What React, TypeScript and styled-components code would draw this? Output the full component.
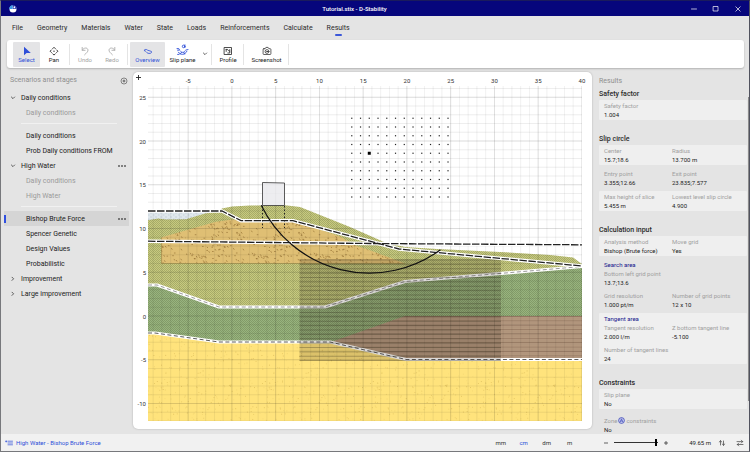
import React from "react";
import styled, { createGlobalStyle } from "styled-components";

const Global = createGlobalStyle`
  * { box-sizing: border-box; }
  html, body, #root { height: 100%; }
  body {
    margin: 0;
    background: #77787c;
    font-family: Roboto, "Open Sans", sans-serif;
    font-size: 7px;
    color: #222;
  }
  button {
    font: inherit;
    color: inherit;
    background: none;
    border: 0;
    padding: 0;
    margin: 0;
    text-align: left;
  }
`;

const Window = styled.div`
  display: flex;
  flex-direction: column;
  height: 100vh;
  overflow: hidden;
  background: #e4e4e4;
  border: 1px solid #77787c;
  border-top-color: #1a1b5c;
  border-right-color: #50525e;
`;

const TitleBar = styled.header`
  display: grid;
  grid-template-columns: 1fr auto 1fr;
  align-items: center;
  flex: none;
  height: 15px;
  padding: 0 6px 0 7px;
  background: #06067c;
  color: #fff;
`;

const AppTitle = styled.h1`
  margin: 0;
  padding-right: 42px;
  font-size: 6px;
  font-weight: 500;
`;

const WindowButtons = styled.div`
  display: flex;
  justify-content: flex-end;
  gap: 12px;
`;

const IconButton = styled.button`
  display: flex;
  align-items: center;
  justify-content: center;
  flex: none;
  width: 10px;
  height: 10px;
`;

const MenuBar = styled.nav`
  display: flex;
  flex: none;
  gap: 14px;
  height: 24px;
  padding: 6px 11px 0;
`;

const MenuItem = styled.button<{ $active?: boolean }>`
  display: flex;
  flex-direction: column;
  align-items: center;
  line-height: 12px;
  color: #2b2b2b;
  &::after {
    content: "";
    width: 7px;
    height: 2px;
    border-radius: 1px;
    background: ${(p) => (p.$active ? "#3b57d9" : "transparent")};
  }
`;

const Toolbar = styled.div`
  display: flex;
  align-items: center;
  flex: none;
  height: 28px;
  margin: 0 5px 4px 6px;
  padding: 0 6px;
  background: #fff;
  border-radius: 3px;
  box-shadow: 0 1px 2px rgba(0, 0, 0, 0.22);
`;

const Tool = styled.button<{ $w: number; $on?: boolean; $dim?: boolean }>`
  display: flex;
  flex-direction: column;
  align-items: center;
  justify-content: flex-end;
  flex: none;
  width: ${(p) => p.$w}px;
  height: 25px;
  padding-bottom: 3px;
  border-radius: 1px;
  font-size: 6px;
  line-height: 8px;
  white-space: nowrap;
  background: ${(p) => (p.$on ? "#e4e4e6" : "transparent")};
  color: ${(p) => (p.$on ? "#2f4fd8" : p.$dim ? "#a3a3a3" : "#222")};
`;

const Separator = styled.span`
  flex: none;
  width: 1px;
  height: 21px;
  margin: 0 2px 0 1px;
  background: #e4e4e4;
`;

const Body = styled.main`
  display: grid;
  grid-template-columns: 132px minmax(0, 1fr) 157px;
  flex: 1;
  min-height: 0;
`;

const Sidebar = styled.aside`
  padding: 1px 4px 0 3px;
`;

const SidebarHead = styled.div`
  display: flex;
  align-items: center;
  justify-content: space-between;
  height: 15px;
  margin-bottom: 2px;
  padding-left: 6px;
`;

const PanelTitle = styled.h2`
  margin: 0 0 1px;
  font-size: 7px;
  font-weight: 400;
  line-height: 12px;
  color: #8f8f8f;
`;

const TreeRow = styled.div<{ $selected?: boolean }>`
  display: flex;
  align-items: center;
  height: 15px;
  padding-right: 2px;
  background: ${(p) => (p.$selected ? "#d5d5d5" : "transparent")};
  &::before {
    content: "";
    width: 2px;
    height: 8px;
    background: ${(p) => (p.$selected ? "#2f4fe0" : "transparent")};
  }
`;

const TreeButton = styled.button<{ $child?: boolean; $dim?: boolean }>`
  display: flex;
  align-items: center;
  flex: 1;
  gap: 4px;
  padding-left: ${(p) => (p.$child ? 20 : 3)}px;
  line-height: 12px;
  white-space: nowrap;
  color: ${(p) => (p.$dim ? "#9a9a9a" : "#222")};
`;

const TreeRule = styled.hr`
  height: 1px;
  margin: 3px 12px 4px 17px;
  border: 0;
  background: #f1f1f1;
`;

const Canvas = styled.section`
  display: flex;
  min-width: 0;
  min-height: 0;
  margin-bottom: 5px;
  overflow: hidden;
  background: #fff;
  border-radius: 5px;
  box-shadow: 0 0 2px rgba(0, 0, 0, 0.25);
`;

const Drawing = styled.svg`
  display: block;
  width: 100%;
  height: 100%;
  font-family: Roboto, "Open Sans", sans-serif;
  font-size: 6px;
`;

const Results = styled.aside`
  position: relative;
  min-height: 0;
  overflow: hidden;
  padding: 3px 2px 0 7px;
`;

const ScrollThumb = styled.span`
  position: absolute;
  top: 25px;
  right: 0;
  width: 1px;
  height: 84%;
  background: #8c8c8c;
`;

const GroupTitle = styled.h3`
  margin: 0;
  font-size: 7px;
  font-weight: 500;
  line-height: 12px;
  color: #2a2a2a;
`;

const Group = styled.section<{ $loose?: boolean }>`
  display: flex;
  flex-direction: column;
  gap: ${(p) => (p.$loose ? 6 : 3)}px;
  margin-bottom: 13px;
`;

const Block = styled.div<{ $shade?: boolean }>`
  display: flex;
  flex-direction: column;
  gap: 4px;
  padding: 1px 5px;
  background: ${(p) => (p.$shade ? "#efefef" : "transparent")};
  border-radius: 1px;
`;

const Fields = styled.dl`
  display: grid;
  grid-template-columns: 68px 1fr;
  margin: 0;
  font-size: 6px;
  line-height: 9px;
  white-space: nowrap;
`;

const Label = styled.dt`
  display: flex;
  align-items: center;
  gap: 1px;
  color: #a0a0a0;
`;

const Value = styled.dd`
  margin: 0;
  color: #1c1c1c;
`;

const SubTitle = styled.h4`
  margin: 0 0 -4px;
  font-size: 6px;
  font-weight: 400;
  line-height: 9px;
  color: #15158c;
`;

const StatusBar = styled.footer`
  display: flex;
  align-items: center;
  flex: none;
  height: 17px;
  padding: 0 4px;
  background: #f1f1f1;
  font-size: 6px;
`;

const StatusPath = styled.span`
  display: flex;
  align-items: center;
  flex: 1;
  gap: 3px;
  color: #2f4fd8;
`;

const Units = styled.div`
  display: flex;
  margin-right: 20px;
`;

const UnitButton = styled.button<{ $on?: boolean }>`
  width: 23px;
  text-align: center;
  color: ${(p) => (p.$on ? "#2f4fd8" : "#333")};
`;

const ZoomGroup = styled.div`
  display: flex;
  align-items: center;
  gap: 3px;
`;

const ZoomRange = styled.input`
  appearance: none;
  width: 44px;
  height: 9px;
  margin: 0;
  background: linear-gradient(#333, #333) center / 100% 1px no-repeat;
  &::-webkit-slider-thumb {
    appearance: none;
    width: 2px;
    height: 7px;
    background: #000;
  }
`;

const Scale = styled.span`
  margin: 0 6px 0 18px;
  white-space: nowrap;
`;

const StatusIcons = styled.div`
  display: flex;
  gap: 8px;
`;

const stroke = {
  fill: "none",
  stroke: "currentColor",
  strokeLinecap: "round" as const,
  strokeLinejoin: "round" as const,
};

function Logo() {
  return (
    <svg width="10" height="10" viewBox="0 0 10 10">
      <circle cx="5" cy="5" r="3.5" fill="#fff" />
      <path d="M4.6 1.2A3.8 3.8 0 0 0 1.2 5H4.6Z" fill="#3d9be8" />
      <path d="M4.800 1.200V4.800H8.600A3.800 3.800 0 0 0 4.800 1.200Z" fill="#0a1aa0" />
      <circle cx="6.4" cy="3.200" r="1" fill="#fff" />
    </svg>
  );
}

function Chevron({ open }: { open?: boolean }) {
  return (
    <svg width="8" height="8" viewBox="0 0 8 8">
      <path d={open ? "M2.4 3L4 4.6 5.6 3" : "M3 2.2L4.6 3.8 3 5.4"} {...stroke} strokeWidth="0.7" />
    </svg>
  );
}

function Dots() {
  return (
    <svg width="8" height="4" viewBox="0 0 8 4">
      <circle cx="1" cy="2" r="0.8" />
      <circle cx="4" cy="2" r="0.8" />
      <circle cx="7" cy="2" r="0.8" />
    </svg>
  );
}

const SelectIcon = () => (
  <svg width="10" height="10" viewBox="0 0 10 10">
    <path d="M2 0.8V9.2L4.6 6.9H8.8Z" fill="#2f4fd8" />
  </svg>
);

const PanIcon = () => (
  <svg width="10" height="10" viewBox="0 0 10 10">
    <g {...stroke} strokeWidth="0.9">
      <path d="M3.7 2.6L5 1.3 6.3 2.6M3.7 7.8L5 9.1 6.3 7.8M2.4 3.9L1.1 5.2 2.4 6.5M7.6 3.9L8.9 5.2 7.6 6.5" />
    </g>
    <circle cx="5" cy="5.2" r="0.6" />
  </svg>
);

const UndoIcon = ({ redo }: { redo?: boolean }) => (
  <svg width="10" height="10" viewBox="0 0 10 10">
    <g transform={redo ? "translate(10 0) scale(-1 1)" : undefined}>
      <path d="M2.2 1.4V4.3H5.1M2.4 4.1C3.6 1.4 7.6 1.2 8 4 8.2 5.6 6.4 7 4.6 8.8" {...stroke} strokeWidth="0.8" />
    </g>
  </svg>
);

const OverviewIcon = () => (
  <svg width="10" height="10" viewBox="0 0 10 10">
    <path d="M1.2 4.2C2 3 3.6 3.2 4.6 4.2L8.4 5.4C9 6.8 7.8 7.6 6 7.4 4 7.4 3.6 6 2.6 5.2Z" {...stroke} strokeWidth="0.8" />
  </svg>
);

const SlipIcon = () => (
  <svg width="13" height="12" viewBox="0 0 13 12">
    <g fill="none" stroke="#2f4fd8" strokeWidth="0.9" strokeLinecap="round">
      <circle cx="7.6" cy="2.4" r="1.3" />
      <path d="M8.9 0.8V3.6M1 4.6H2.8L3.6 6.2H1.6M2.4 8.2C4.4 11.4 9 11.2 10.8 7.4M4.6 7.4C6 9 8 8.8 9.2 6.8M10 6L12 5.6M4.4 9.8L5.6 8.2M8.6 10L7.8 8.4M1.6 10.4H3" />
    </g>
  </svg>
);

const ProfileIcon = () => (
  <svg width="10" height="10" viewBox="0 0 10 10">
    <g {...stroke} strokeWidth="0.8">
      <rect x="1.5" y="1.5" width="7" height="7" />
      <path d="M3 3.4H4.6C4.8 4.8 6 4.4 6.8 5.2M3.2 3.6V5.4M6.8 3.6V7H4.8" />
    </g>
  </svg>
);

const CameraIcon = () => (
  <svg width="10" height="10" viewBox="0 0 10 10">
    <g {...stroke} strokeWidth="0.7">
      <path d="M1.9 2.7H3.2L3.9 1.4H6.1L6.8 2.7H8.1Q8.9 2.7 8.9 3.5V7.7Q8.9 8.5 8.1 8.5H1.9Q1.1 8.5 1.1 7.7V3.5Q1.1 2.7 1.9 2.7Z" />
      <circle cx="5" cy="5.5" r="1.9" />
      <circle cx="5" cy="5.5" r="0.4" />
    </g>
  </svg>
);

const X = (m: number) => 231.9 + m * 8.75;
const Y = (m: number) => 316 - m * 8.75;

const range = (from: number, to: number) =>
  Array.from({ length: to - from + 1 }, (_, i) => from + i);

function speckles(count: number, w: number, h: number, seed: number) {
  let s = seed;
  const next = () => {
    s = (s * 16807) % 2147483647;
    return s / 2147483647;
  };
  return Array.from({ length: count }, () => ({ x: next() * w, y: next() * h, v: next() }));
}

const sandDots = speckles(300, 108, 96, 77);
const clayMarks = speckles(190, 62, 62, 1234);

const BASE = "148,333 155,333 219,342 330,342 406,359.5 582,359.5";
const OLIVE_BASE = "148,285 157,285 219,307 325,307 405,281.5 582,266.5";
const PHREATIC = "148,211 222,211 241,220.7 293,220.7 399,249 582,266";
const HEAD = "148,241.2 370,243.5 582,244.8";

function CrossSection() {
  return (
    <Drawing viewBox="133 72 459 357" role="img" aria-label="Cross section with slip circle">
      <defs>
        <clipPath id="plot">
          <rect x="148" y="86" width="434" height="335" />
        </clipPath>
        <pattern id="weave" width="2" height="2" patternUnits="userSpaceOnUse">
          <rect width="1" height="1" fill="#3f4a1c" opacity="0.24" />
          <rect x="1" y="1" width="1" height="1" fill="#3f4a1c" opacity="0.24" />
        </pattern>
        <pattern id="sand" width="108" height="96" patternUnits="userSpaceOnUse">
          {sandDots.map((d, i) => (
            <rect key={i} x={d.x} y={d.y} width="1" height="1" fill="#b58f2c" opacity={0.08 + d.v * 0.28} />
          ))}
        </pattern>
        <pattern id="clay" width="62" height="62" patternUnits="userSpaceOnUse">
          {clayMarks.map((d, i) => (
            <path
              key={i}
              d={d.v > 0.5 ? `M${d.x} ${d.y}h1.6` : `M${d.x} ${d.y}l1 1.6`}
              stroke="#8a6428"
              strokeWidth="0.9"
              opacity="0.65"
            />
          ))}
        </pattern>
        <pattern id="peat" width="6" height="4.375" y="316" patternUnits="userSpaceOnUse">
          <path d="M0 0.5H6" stroke="#6b4b38" strokeWidth="0.8" opacity="0.45" />
          <path d="M0 2.6H6" stroke="#6b4b38" strokeWidth="0.5" opacity="0.2" />
        </pattern>
        <pattern id="water" width="5" height="4" patternUnits="userSpaceOnUse">
          <path d="M0 1h2M3 3h1.5" stroke="#b4c3cc" strokeWidth="0.6" />
        </pattern>
      </defs>

      <path d="M136 77.5h5M138.500 75v5" stroke="#222" strokeWidth="0.9" />
      {range(-1, 8).map((n) => (
        <text key={n} x={X(n * 5)} y="82.500" textAnchor="middle" fill="#333">
          {n * 5}
        </text>
      ))}
      {range(-2, 5).map((n) => (
        <text key={n} x="146" y={Y(n * 5) + 2.500} textAnchor="end" fill="#333">
          {n * 5}
        </text>
      ))}

      <g clipPath="url(#plot)">
        <polygon points="148,211 222,211 210,215 186,221 148,222" fill="#dfe7ec" />
        <polygon points="148,211 222,211 210,215 186,221 148,222" fill="url(#water)" />

        {["#c8ca80", "url(#weave)"].map((fill) => (
          <polygon
            key={fill}
            fill={fill}
            points="148,220.3 158,218.6 166,219.6 186,219.3 205,213.5 218,211.5 222,208.500 232,206.5 250,205.5 285,205.2 300,207 350,227 384,242 405,247 437,249 500,252 550,255 573,257.5 582,264 582,268 405,283 325,308 219,308 157,287 148,287"
          />
        ))}
        {["#dfbf74", "url(#clay)"].map((fill) => (
          <polygon
            key={fill}
            fill={fill}
            points="161,237.5 215,222 232,219.500 297,221.5 340,236.5 357,246 372,251 405,263.5 161,263.5"
          />
        ))}
        <path d="M161.500 237.500V263.500H405" fill="none" stroke="#8f8140" strokeWidth="0.7" opacity="0.7" />
        {["#98b47f", "url(#weave)"].map((fill) => (
          <polygon key={fill} fill={fill} points={`${OLIVE_BASE} 582,317 405,317 331,343 219,343 148,334`} />
        ))}
        <polygon points={`${BASE} 582,421 148,421`} fill="#ffe37c" />
        <polygon points={`${BASE} 582,421 148,421`} fill="url(#sand)" />
        <polygon points="331,342 405,316 582,316 582,359.5 406,359.5" fill="#b4997f" />
        <polygon points="331,342 405,316 582,316 582,359.5 406,359.5" fill="url(#peat)" />

        <g stroke="#000" strokeWidth="0.8">
          {range(-9, 40).map((n) => (
            <path key={n} d={`M${X(n)} 86V421`} opacity={n % 5 === 0 ? 0.17 : 0.07} />
          ))}
          {range(-12, 26).map((n) => (
            <path key={n} d={`M148 ${Y(n)}H582`} opacity={n % 5 === 0 ? 0.17 : 0.08} />
          ))}
        </g>

        <g fill="none" stroke="#fff" strokeWidth="3.2" strokeLinejoin="round">
          <polyline points={OLIVE_BASE} />
          <polyline points={BASE} />
        </g>
        <g fill="none" strokeWidth="1">
          <polyline points={OLIVE_BASE} stroke="#9a9a9a" strokeDasharray="4 2.500" />
          <polyline points={BASE} stroke="#5d5d5d" strokeDasharray="4 2.500" />
        </g>

        <rect x="299.500" y="259" width="201.500" height="102" fill="#2a2010" opacity="0.17" />
        <g stroke="#2d2a18" strokeWidth="0.7" opacity="0.42">
          {range(0, 23).map((n) => (
            <path key={n} d={`M299.500 ${Y(-5.1) - n * 4.375}H501`} />
          ))}
        </g>

        <g fill="none" stroke="#fff" strokeWidth="3.600" strokeLinejoin="round">
          <polyline points={PHREATIC} />
          <polyline points={HEAD} />
        </g>
        <g fill="none" stroke="#222" strokeWidth="1.3" strokeDasharray="7.500 1.500">
          <polyline points={PHREATIC} />
          <polyline points={HEAD} />
        </g>

        <path d="M262.500 182.500L284.500 183V205.500H262.500Z" fill="#e9e9ec" fillOpacity="0.8" stroke="#333" strokeWidth="0.8" />
        <path d="M262.500 206V228M284.500 206V228" stroke="#222" strokeDasharray="1.500 2" />
        <path
          d={`M${X(3.355)} ${Y(12.66)}A119.9 119.9 0 0 0 ${X(23.835)} ${Y(7.577)}`}
          fill="none"
          stroke="#111"
          strokeWidth="1.2"
        />
        {range(0, 9).map((r) =>
          range(0, 11).map((c) => (
            <rect key={`${r}-${c}`} x={X(13.7 + c) - 0.6} y={Y(13.6 + r) - 0.6} width="1.2" height="1.2" fill="#222" />
          ))
        )}
        <rect x={X(15.7) - 1.5} y={Y(18.6) - 1.5} width="3" height="3" />
      </g>
    </Drawing>
  );
}

type Node = { text: string; child?: boolean; dim?: boolean; open?: boolean; more?: boolean; selected?: boolean; rule?: boolean };

const tree: Node[] = [
  { text: "Daily conditions", open: true },
  { text: "Daily conditions", child: true, dim: true, rule: true },
  { text: "Daily conditions", child: true },
  { text: "Prob Daily conditions FROM", child: true },
  { text: "High Water", open: true, more: true },
  { text: "Daily conditions", child: true, dim: true },
  { text: "High Water", child: true, dim: true, rule: true },
  { text: "Bishop Brute Force", child: true, selected: true, more: true },
  { text: "Spencer Genetic", child: true },
  { text: "Design Values", child: true },
  { text: "Probabilistic", child: true },
  { text: "Improvement" },
  { text: "Large improvement" },
];

const menu = ["File", "Geometry", "Materials", "Water", "State", "Loads", "Reinforcements", "Calculate", "Results"];

function Pair({ items }: { items: [React.ReactNode, string][] }) {
  return (
    <Fields>
      {items.map(([label], i) => (
        <Label key={i} style={{ gridColumn: i + 1, gridRow: 1 }}>
          {label}
        </Label>
      ))}
      {items.map(([, value], i) => (
        <Value key={i} style={{ gridColumn: i + 1, gridRow: 2 }}>
          {value}
        </Value>
      ))}
    </Fields>
  );
}

export default function App() {
  return (
    <>
      <Global />
      <Window>
        <TitleBar>
          <Logo />
          <AppTitle>Tutorial.stix - D-Stability</AppTitle>
          <WindowButtons>
            <IconButton aria-label="Minimize">
              <svg width="8" height="8" viewBox="0 0 8 8">
                <path d="M1.500 4H6.500" {...stroke} strokeWidth="0.7" />
              </svg>
            </IconButton>
            <IconButton aria-label="Maximize">
              <svg width="8" height="8" viewBox="0 0 8 8">
                <rect x="1.500" y="1.500" width="4.500" height="4.500" {...stroke} strokeWidth="0.7" />
              </svg>
            </IconButton>
            <IconButton aria-label="Close">
              <svg width="8" height="8" viewBox="0 0 8 8">
                <path d="M1.800 1.800L6.200 6.200M6.200 1.800L1.800 6.200" {...stroke} strokeWidth="0.7" />
              </svg>
            </IconButton>
          </WindowButtons>
        </TitleBar>

        <MenuBar>
          {menu.map((m) => (
            <MenuItem key={m} $active={m === "Results"}>
              {m}
            </MenuItem>
          ))}
        </MenuBar>

        <Toolbar>
          <Tool $w={27} $on><SelectIcon />Select</Tool>
          <Tool $w={28}><PanIcon />Pan</Tool>
          <Separator />
          <Tool $w={26} $dim><UndoIcon />Undo</Tool>
          <Tool $w={28} $dim><UndoIcon redo />Redo</Tool>
          <Separator />
          <Tool $w={35} $on><OverviewIcon />Overview</Tool>
          <Tool $w={35}><SlipIcon />Slip plane</Tool>
          <IconButton aria-label="Slip plane options"><Chevron open /></IconButton>
          <Separator />
          <Tool $w={28}><ProfileIcon />Profile</Tool>
          <Separator />
          <Tool $w={41}><CameraIcon />Screenshot</Tool>
          <Separator />
        </Toolbar>

        <Body>
          <Sidebar>
            <SidebarHead>
              <PanelTitle>Scenarios and stages</PanelTitle>
              <IconButton aria-label="Add scenario">
                <svg width="8" height="8" viewBox="0 0 8 8">
                  <circle cx="4" cy="4" r="3" fill="none" stroke="#444" strokeWidth="0.6" />
                  <path d="M2.600 4H5.400M4 2.600V5.400" stroke="#444" strokeWidth="0.8" />
                </svg>
              </IconButton>
            </SidebarHead>
            {tree.map((n, i) => (
              <React.Fragment key={i}>
                <TreeRow $selected={n.selected}>
                  <TreeButton $child={n.child} $dim={n.dim}>
                    {!n.child && <Chevron open={n.open} />}
                    {n.text}
                  </TreeButton>
                  {n.more && <IconButton aria-label={`${n.text} options`}><Dots /></IconButton>}
                </TreeRow>
                {n.rule && <TreeRule />}
              </React.Fragment>
            ))}
          </Sidebar>

          <Canvas>
            <CrossSection />
          </Canvas>

          <Results>
            <PanelTitle>Results</PanelTitle>
            <GroupTitle>Safety factor</GroupTitle>
            <Group>
              <Block $shade><Pair items={[["Safety factor", "1.004"]]} /></Block>
            </Group>
            <GroupTitle>Slip circle</GroupTitle>
            <Group>
              <Block $shade><Pair items={[["Center", "15.7;18.6"], ["Radius", "13.700 m"]]} /></Block>
              <Block><Pair items={[["Entry point", "3.355;12.66"], ["Exit point", "23.835;7.577"]]} /></Block>
              <Block $shade><Pair items={[["Max height of slice", "5.455 m"], ["Lowest level slip circle", "4.900"]]} /></Block>
            </Group>
            <GroupTitle>Calculation input</GroupTitle>
            <Group>
              <Block $shade><Pair items={[["Analysis method", "Bishop (Brute force)"], ["Move grid", "Yes"]]} /></Block>
              <Block>
                <SubTitle>Search area</SubTitle>
                <Pair items={[["Bottom left grid point", "13.7;13.6"]]} />
                <Pair items={[["Grid resolution", "1.000 pt/m"], ["Number of grid points", "12 x 10"]]} />
              </Block>
              <Block $shade>
                <SubTitle>Tangent area</SubTitle>
                <Pair items={[["Tangent resolution", "2.000 l/m"], ["Z bottom tangent line", "-5.100"]]} />
                <Pair items={[["Number of tangent lines", "24"]]} />
              </Block>
            </Group>
            <GroupTitle>Constraints</GroupTitle>
            <Group $loose>
              <Block $shade><Pair items={[["Slip plane", "No"]]} /></Block>
              <Block>
                <Pair
                  items={[[
                    <>
                      Zone
                      <svg width="7" height="7" viewBox="0 0 7 7">
                        <circle cx="3.500" cy="3.500" r="2.900" fill="#c9cef0" stroke="#2a35b0" strokeWidth="0.7" />
                        <path d="M2.200 5L3.500 1.800L4.800 5M2.700 4H4.300" fill="none" stroke="#2a35b0" strokeWidth="0.6" />
                      </svg>
                      constraints
                    </>,
                    "No",
                  ]]}
                />
              </Block>
            </Group>
            <ScrollThumb />
          </Results>
        </Body>

        <StatusBar>
          <StatusPath>
            <svg width="8" height="8" viewBox="0 0 8 8">
              <path d="M3 2.200H7.500M3 4H7.500M3 5.800H7.500M0.600 2.400H1.800M1.200 1.800V3" {...stroke} strokeWidth="0.7" />
            </svg>
            High Water - Bishop Brute Force
          </StatusPath>
          <Units>
            {["mm", "cm", "dm", "m"].map((u) => (
              <UnitButton key={u} $on={u === "cm"}>{u}</UnitButton>
            ))}
          </Units>
          <ZoomGroup>
            <IconButton aria-label="Zoom out">
              <svg width="6" height="6" viewBox="0 0 6 6"><path d="M1 3H5" stroke="#222" strokeWidth="0.7" /></svg>
            </IconButton>
            <ZoomRange type="range" aria-label="Zoom" min="0" max="100" defaultValue="98" />
            <IconButton aria-label="Zoom in">
              <svg width="6" height="6" viewBox="0 0 6 6"><path d="M1 3H5M3 1V5" stroke="#222" strokeWidth="0.7" /></svg>
            </IconButton>
          </ZoomGroup>
          <Scale>49.65 m</Scale>
          <StatusIcons>
            <IconButton aria-label="Vertical scale">
              <svg width="8" height="8" viewBox="0 0 8 8">
                <path d="M2.500 6V1.800M1.200 3L2.500 1.800L3.800 3M5.500 2V6.200M4.200 5L5.500 6.200L6.800 5" {...stroke} strokeWidth="0.6" />
              </svg>
            </IconButton>
            <IconButton aria-label="Swap direction">
              <svg width="8" height="8" viewBox="0 0 8 8">
                <path d="M1 2.600H6.500M5.300 1.200L6.700 2.600L5.300 4M7 5.500H1.500M2.700 4.100L1.300 5.500L2.700 6.900" {...stroke} strokeWidth="0.6" />
              </svg>
            </IconButton>
          </StatusIcons>
        </StatusBar>
      </Window>
    </>
  );
}
